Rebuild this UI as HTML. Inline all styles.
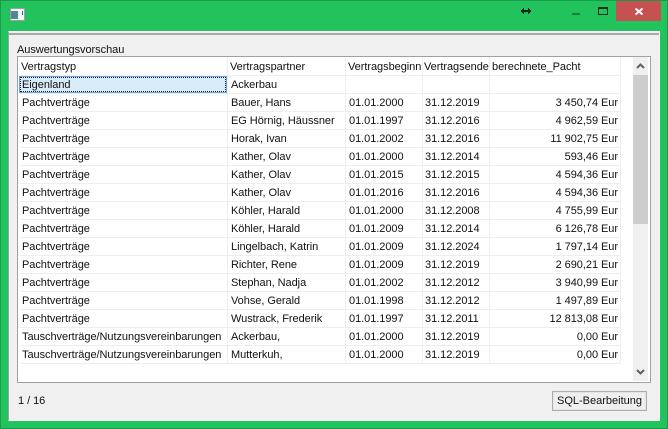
<!DOCTYPE html>
<html><head><meta charset="utf-8">
<style>
html,body{margin:0;padding:0}
body{width:668px;height:429px;overflow:hidden;position:relative;background:#22c35c;font-family:"Liberation Sans",sans-serif;font-size:11px;color:#111}
div{position:absolute;box-sizing:border-box}
.t{white-space:nowrap;line-height:14px;height:14px;letter-spacing:-.05px}
.r{text-align:right}
.v{top:57px;width:1px;height:306px;background:#eeeeee}
.l{left:20px;width:600px;height:1px;background:#eeeeee}
</style></head><body>
<div style="left:0;top:0;width:668px;height:429px;border:1px solid #1a9a4a"></div>

<!-- title icon -->
<div style="left:10px;top:8px;width:15px;height:13px;background:#f4f4f4;border:1px solid #9aa0a6"></div>
<div style="left:11px;top:11px;width:7px;height:8px;background:#4d8a96"></div>
<div style="left:22px;top:11px;width:1px;height:4px;background:#2a5fc0"></div>

<!-- resize glyph -->
<svg style="position:absolute;left:521px;top:8px" width="10" height="6" viewBox="0 0 10 6" shape-rendering="crispEdges"><path d="M0 2h10v2H0zM1 1h2v4H1zM2 0h1v6H2zM7 1h2v4H7zM7 0h1v6H7z" fill="#12281c"/></svg>

<!-- window buttons -->
<div style="left:572px;top:13px;width:8px;height:2px;background:#158043"></div>
<div style="left:598px;top:7px;width:10px;height:8px;border:1px solid #10301c;border-top-width:2px"></div>
<div style="left:616px;top:1px;width:45px;height:20px;background:#c75050"></div>
<svg style="position:absolute;left:635px;top:8px" width="8" height="7" viewBox="0 0 8 7"><path d="M0.5 0.5L7.5 6.5M7.5 0.5L0.5 6.5" stroke="#fff" stroke-width="2" fill="none"/></svg>

<!-- client -->
<div style="left:8px;top:31px;width:652px;height:390px;background:#f0f0f0;border-top:1px solid #fff;border-left:1px solid #a0a0a0;border-right:1px solid #fff;border-bottom:1px solid #fff"></div>
<div style="left:9px;top:33px;width:650px;height:2px;background:#a8a8a8"></div>

<div class="t" style="left:17px;top:43px">Auswertungsvorschau</div>

<!-- list -->
<div style="left:17px;top:56px;width:634px;height:327px;background:#fff;border:1px solid #a0a0a8"></div>

<div class="v" style="left:227px"></div>
<div class="v" style="left:345px"></div>
<div class="v" style="left:422px"></div>
<div class="v" style="left:489px"></div>
<div class="v" style="left:620px"></div>
<div class="l" style="top:75px"></div>
<div class="l" style="top:93px"></div>
<div class="l" style="top:111px"></div>
<div class="l" style="top:129px"></div>
<div class="l" style="top:147px"></div>
<div class="l" style="top:165px"></div>
<div class="l" style="top:183px"></div>
<div class="l" style="top:201px"></div>
<div class="l" style="top:219px"></div>
<div class="l" style="top:237px"></div>
<div class="l" style="top:255px"></div>
<div class="l" style="top:273px"></div>
<div class="l" style="top:291px"></div>
<div class="l" style="top:309px"></div>
<div class="l" style="top:327px"></div>
<div class="l" style="top:345px"></div>
<div class="l" style="top:363px"></div>

<div class="t" style="left:21px;top:60px">Vertragstyp</div>
<div class="t" style="left:230px;top:60px">Vertragspartner</div>
<div class="t" style="left:348px;top:60px">Vertragsbeginn</div>
<div class="t" style="left:424px;top:60px">Vertragsende</div>
<div class="t" style="left:492px;top:60px">berechnete_Pacht</div>

<!-- selected -->
<div style="left:19px;top:76px;width:208px;height:17px;background:#d9ebf9;border:1px solid #66a7e8"></div>
<div style="left:20px;top:77px;width:206px;height:15px;border:1px dotted #222"></div>
<div class="t" style="left:22px;top:78px">Eigenland</div>
<div class="t" style="left:231px;top:78px">Ackerbau</div>

<div class="t" style="left:22px;top:96px">Pachtverträge</div><div class="t" style="left:231px;top:96px">Bauer, Hans</div><div class="t" style="left:349px;top:96px">01.01.2000</div><div class="t" style="left:425px;top:96px">31.12.2019</div><div class="t r" style="left:490px;width:128px;top:96px">3 450,74 Eur</div>
<div class="t" style="left:22px;top:114px">Pachtverträge</div><div class="t" style="left:231px;top:114px">EG Hörnig, Häussner</div><div class="t" style="left:349px;top:114px">01.01.1997</div><div class="t" style="left:425px;top:114px">31.12.2016</div><div class="t r" style="left:490px;width:128px;top:114px">4 962,59 Eur</div>
<div class="t" style="left:22px;top:132px">Pachtverträge</div><div class="t" style="left:231px;top:132px">Horak, Ivan</div><div class="t" style="left:349px;top:132px">01.01.2002</div><div class="t" style="left:425px;top:132px">31.12.2016</div><div class="t r" style="left:490px;width:128px;top:132px">11 902,75 Eur</div>
<div class="t" style="left:22px;top:150px">Pachtverträge</div><div class="t" style="left:231px;top:150px">Kather, Olav</div><div class="t" style="left:349px;top:150px">01.01.2000</div><div class="t" style="left:425px;top:150px">31.12.2014</div><div class="t r" style="left:490px;width:128px;top:150px">593,46 Eur</div>
<div class="t" style="left:22px;top:168px">Pachtverträge</div><div class="t" style="left:231px;top:168px">Kather, Olav</div><div class="t" style="left:349px;top:168px">01.01.2015</div><div class="t" style="left:425px;top:168px">31.12.2015</div><div class="t r" style="left:490px;width:128px;top:168px">4 594,36 Eur</div>
<div class="t" style="left:22px;top:186px">Pachtverträge</div><div class="t" style="left:231px;top:186px">Kather, Olav</div><div class="t" style="left:349px;top:186px">01.01.2016</div><div class="t" style="left:425px;top:186px">31.12.2016</div><div class="t r" style="left:490px;width:128px;top:186px">4 594,36 Eur</div>
<div class="t" style="left:22px;top:204px">Pachtverträge</div><div class="t" style="left:231px;top:204px">Köhler, Harald</div><div class="t" style="left:349px;top:204px">01.01.2000</div><div class="t" style="left:425px;top:204px">31.12.2008</div><div class="t r" style="left:490px;width:128px;top:204px">4 755,99 Eur</div>
<div class="t" style="left:22px;top:222px">Pachtverträge</div><div class="t" style="left:231px;top:222px">Köhler, Harald</div><div class="t" style="left:349px;top:222px">01.01.2009</div><div class="t" style="left:425px;top:222px">31.12.2014</div><div class="t r" style="left:490px;width:128px;top:222px">6 126,78 Eur</div>
<div class="t" style="left:22px;top:240px">Pachtverträge</div><div class="t" style="left:231px;top:240px">Lingelbach, Katrin</div><div class="t" style="left:349px;top:240px">01.01.2009</div><div class="t" style="left:425px;top:240px">31.12.2024</div><div class="t r" style="left:490px;width:128px;top:240px">1 797,14 Eur</div>
<div class="t" style="left:22px;top:258px">Pachtverträge</div><div class="t" style="left:231px;top:258px">Richter, Rene</div><div class="t" style="left:349px;top:258px">01.01.2009</div><div class="t" style="left:425px;top:258px">31.12.2019</div><div class="t r" style="left:490px;width:128px;top:258px">2 690,21 Eur</div>
<div class="t" style="left:22px;top:276px">Pachtverträge</div><div class="t" style="left:231px;top:276px">Stephan, Nadja</div><div class="t" style="left:349px;top:276px">01.01.2002</div><div class="t" style="left:425px;top:276px">31.12.2012</div><div class="t r" style="left:490px;width:128px;top:276px">3 940,99 Eur</div>
<div class="t" style="left:22px;top:294px">Pachtverträge</div><div class="t" style="left:231px;top:294px">Vohse, Gerald</div><div class="t" style="left:349px;top:294px">01.01.1998</div><div class="t" style="left:425px;top:294px">31.12.2012</div><div class="t r" style="left:490px;width:128px;top:294px">1 497,89 Eur</div>
<div class="t" style="left:22px;top:312px">Pachtverträge</div><div class="t" style="left:231px;top:312px">Wustrack, Frederik</div><div class="t" style="left:349px;top:312px">01.01.1997</div><div class="t" style="left:425px;top:312px">31.12.2011</div><div class="t r" style="left:490px;width:128px;top:312px">12 813,08 Eur</div>
<div class="t" style="left:22px;top:330px">Tauschverträge/Nutzungsvereinbarungen</div><div class="t" style="left:231px;top:330px">Ackerbau,</div><div class="t" style="left:349px;top:330px">01.01.2000</div><div class="t" style="left:425px;top:330px">31.12.2019</div><div class="t r" style="left:490px;width:128px;top:330px">0,00 Eur</div>
<div class="t" style="left:22px;top:348px">Tauschverträge/Nutzungsvereinbarungen</div><div class="t" style="left:231px;top:348px">Mutterkuh,</div><div class="t" style="left:349px;top:348px">01.01.2000</div><div class="t" style="left:425px;top:348px">31.12.2019</div><div class="t r" style="left:490px;width:128px;top:348px">0,00 Eur</div>

<!-- scrollbar -->
<div style="left:633px;top:57px;width:15px;height:324px;background:#f0f0f0"></div>
<div style="left:633px;top:75px;width:15px;height:149px;background:#cdcdcd"></div>
<svg style="position:absolute;left:636px;top:62px" width="9" height="7" viewBox="0 0 9 7"><path d="M1 6L4.5 2.5L8 6" stroke="#606060" stroke-width="2" fill="none"/></svg>
<svg style="position:absolute;left:636px;top:369px" width="9" height="7" viewBox="0 0 9 7"><path d="M1 1L4.5 4.5L8 1" stroke="#606060" stroke-width="2" fill="none"/></svg>

<div class="t" style="left:18px;top:394px">1 / 16</div>

<div style="left:552px;top:391px;width:95px;height:20px;background:#efefef;border:1px solid #adadad;box-shadow:inset 0 0 0 1px #e4e4e4"></div>
<div class="t" style="left:552px;width:95px;text-align:center;top:394px;letter-spacing:0">SQL-Bearbeitung</div>
</body></html>
